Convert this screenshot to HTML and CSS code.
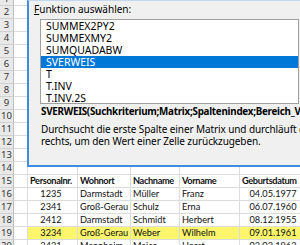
FILE: index.html
```html
<!DOCTYPE html>
<html lang="de">
<head>
<meta charset="utf-8">
<link rel="stylesheet" href="styles.css">
</head>
<body>
<div class="screen">
  <div class="sheet">
    <div class="rh">1</div><div class="c"></div><div class="c"></div><div class="c"></div><div class="c"></div><div class="c"></div><div class="c"></div>
    <div class="rh">2</div><div class="c"></div><div class="c"></div><div class="c"></div><div class="c"></div><div class="c"></div><div class="c"></div>
    <div class="rh">3</div><div class="c"></div><div class="c"></div><div class="c"></div><div class="c"></div><div class="c"></div><div class="c"></div>
    <div class="rh">4</div><div class="c"></div><div class="c"></div><div class="c"></div><div class="c"></div><div class="c"></div><div class="c"></div>
    <div class="rh">5</div><div class="c"></div><div class="c"></div><div class="c"></div><div class="c"></div><div class="c"></div><div class="c"></div>
    <div class="rh">6</div><div class="c"></div><div class="c"></div><div class="c"></div><div class="c"></div><div class="c"></div><div class="c"></div>
    <div class="rh">7</div><div class="c"></div><div class="c"></div><div class="c"></div><div class="c"></div><div class="c"></div><div class="c"></div>
    <div class="rh">8</div><div class="c"></div><div class="c"></div><div class="c"></div><div class="c"></div><div class="c"></div><div class="c"></div>
    <div class="rh">9</div><div class="c"></div><div class="c"></div><div class="c"></div><div class="c"></div><div class="c"></div><div class="c"></div>
    <div class="rh">10</div><div class="c"></div><div class="c"></div><div class="c"></div><div class="c"></div><div class="c"></div><div class="c"></div>
    <div class="rh">11</div><div class="c"></div><div class="c"></div><div class="c"></div><div class="c"></div><div class="c"></div><div class="c"></div>
    <div class="rh">12</div><div class="c"></div><div class="c"></div><div class="c"></div><div class="c"></div><div class="c"></div><div class="c"></div>
    <div class="rh">13</div><div class="c"></div><div class="c"></div><div class="c"></div><div class="c"></div><div class="c"></div><div class="c"></div>
    <div class="rh">14</div><div class="c"></div><div class="c"></div><div class="c"></div><div class="c"></div><div class="c"></div><div class="c"></div>
    <div class="rh">15</div><div class="c"></div><div class="c hd">Personalnr.</div><div class="c hd">Wohnort</div><div class="c hd">Nachname</div><div class="c hd">Vorname</div><div class="c hd">Geburtsdatum</div>
    <div class="rh">16</div><div class="c"></div><div class="c num">1235</div><div class="c">Darmstadt</div><div class="c">Müller</div><div class="c">Franz</div><div class="c num">04.05.1977</div>
    <div class="rh">17</div><div class="c"></div><div class="c num">2341</div><div class="c">Groß-Gerau</div><div class="c">Schulz</div><div class="c">Erna</div><div class="c num">06.07.1960</div>
    <div class="rh">18</div><div class="c"></div><div class="c num">2412</div><div class="c">Darmstadt</div><div class="c">Schmidt</div><div class="c">Herbert</div><div class="c num">08.12.1955</div>
    <div class="rh">19</div><div class="c"></div><div class="c num hl">3234</div><div class="c hl">Groß-Gerau</div><div class="c hl">Weber</div><div class="c hl">Wilhelm</div><div class="c num hl">09.01.1961</div>
    <div class="rh">20</div><div class="c"></div><div class="c num">3421</div><div class="c">Mannheim</div><div class="c">Maier</div><div class="c">Horst</div><div class="c num">03.03.1962</div>
  </div>

  <div class="dialog">
    <div class="label"><u>F</u>unktion auswählen:</div>
    <div class="listbox">
      <div class="item">SUMMEX2PY2</div>
      <div class="item">SUMMEXMY2</div>
      <div class="item">SUMQUADABW</div>
      <div class="item sel">SVERWEIS</div>
      <div class="item">T</div>
      <div class="item">T.INV</div>
      <div class="item">T.INV.2S</div>
    </div>
    <div class="syntax">SVERWEIS(Suchkriterium;Matrix;Spaltenindex;Bereich_Verweis)</div>
    <div class="desc">Durchsucht die erste Spalte einer Matrix und durchläuft die Zeile nach</div>
    <div class="desc">rechts, um den Wert einer Zelle zurückzugeben.</div>
  </div>
</div>
</body>
</html>
```
FILE: styles.css
```css
html, body {
  margin: 0;
  padding: 0;
  background: #ffffff;
}
.screen {
  position: relative;
  width: 300px;
  height: 245px;
  overflow: hidden;
}
.sheet {
  display: grid;
  grid-template-columns: 14px 14px 50px 53px 49px 60px 70px;
  grid-auto-rows: 13px;
  margin-top: -7.5px;
  font-family: Lato, "Open Sans", sans-serif;
  font-size: 9.2px;
  color: #111;
}
.rh {
  box-sizing: border-box;
  background: #e9e9e9;
  border-right: 1px solid #bdbdbd;
  border-bottom: 1px solid #d0d0d0;
  color: #333;
  text-align: center;
  line-height: 12px;
  font-size: 9.5px;
  font-family: "Noto Sans", sans-serif;
}
.c {
  box-sizing: border-box;
  border-right: 1px solid #dcdcdc;
  border-bottom: 1px solid #dcdcdc;
  padding-left: 2px;
  line-height: 12px;
  white-space: nowrap;
  overflow: hidden;
}
.hd { font-weight: bold; letter-spacing: -0.35px; }
.num { text-align: center; padding-left: 0; padding-right: 3px; }
.hl { background: #fbf56c; }

.dialog {
  position: absolute;
  left: 27px;
  top: 0;
  width: 320px;
  height: 167px;
  box-sizing: border-box;
  background: #f0f0f0;
  border-left: 2px solid #3d8ddf;
  border-bottom: 2px solid #3d8ddf;
  border-top: 1px solid #c3d8ee;
  font-family: "Noto Sans", sans-serif;
  font-size: 10px;
  color: #000;
  padding-left: 5px;
  white-space: nowrap;
}
.label {
  line-height: 14px;
  margin-top: 1px;
}
.listbox {
  margin-top: 3px;
  margin-left: 6px;
  width: 259px;
  height: 85px;
  box-sizing: border-box;
  background: #fff;
  border: 1px solid #a0a0a0;
  overflow: hidden;
}
.item {
  height: 12px;
  line-height: 12px;
  padding-left: 5px;
  font-size: 10.5px;
}
.item.sel {
  background: #0078d7;
  color: #fff;
}
.syntax {
  margin-left: 7px;
  margin-top: 1px;
  font-weight: bold;
  font-size: 9.8px;
  letter-spacing: -0.25px;
  line-height: 14px;
}
.desc {
  margin-left: 7px;
  line-height: 12px;
  letter-spacing: -0.1px;
}
.syntax + .desc {
  margin-top: 4px;
}
```
